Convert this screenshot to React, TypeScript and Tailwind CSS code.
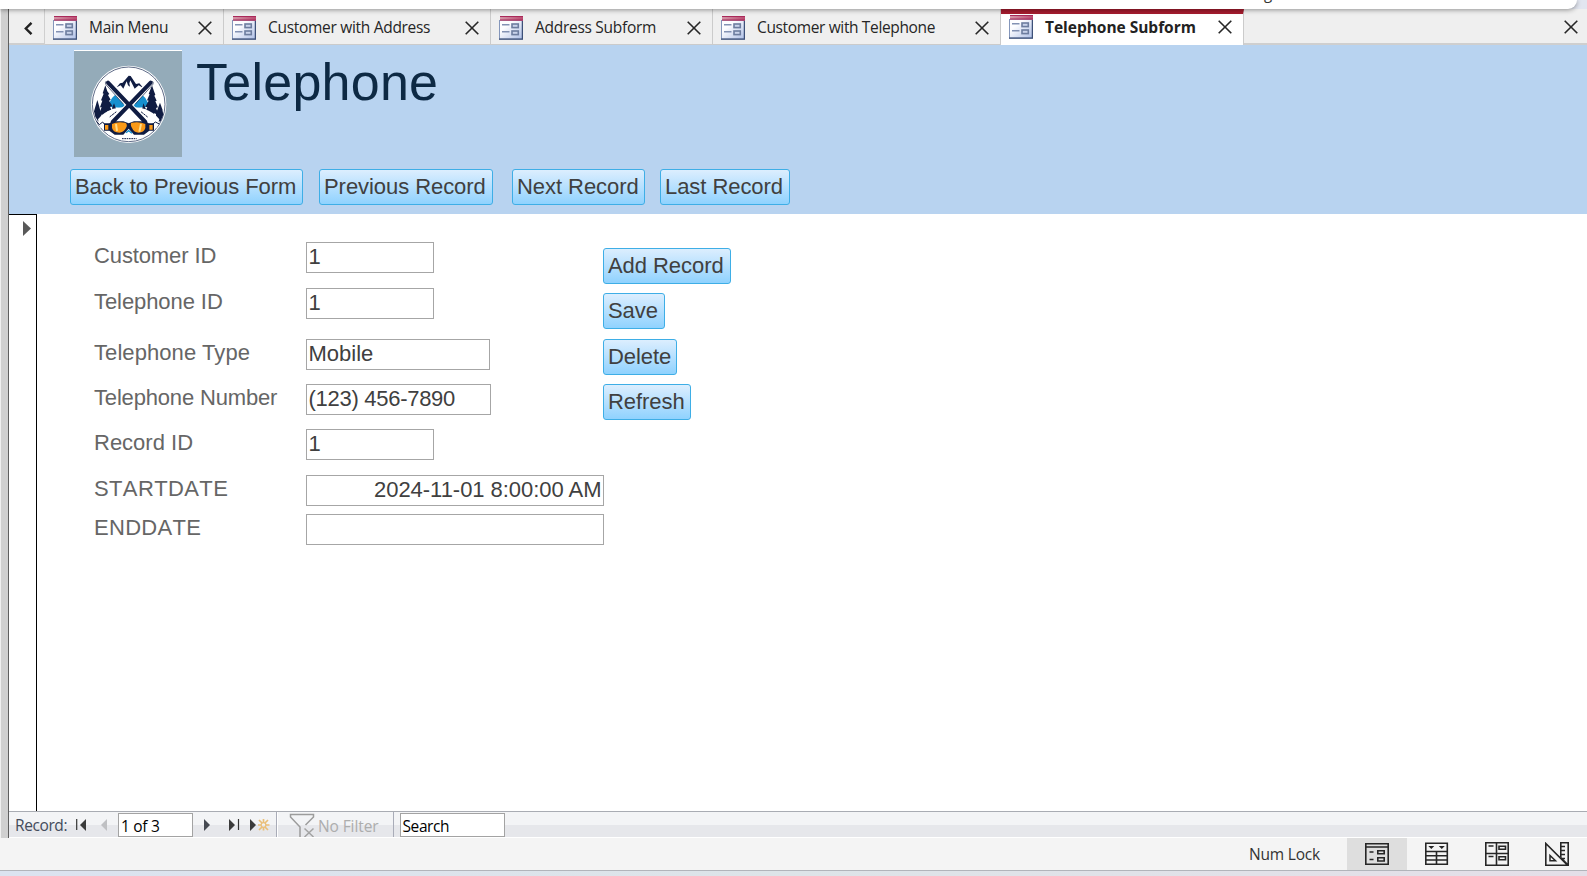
import React from "react";

const UI = "font-['Open_Sans','Noto_Sans',sans-serif]";

function FormIcon() {
  return (
    <svg className="block h-6 w-6 shrink-0" viewBox="0 0 24 24">
      <defs>
        <linearGradient id="formBody" x1="0" y1="0" x2="1" y2="1">
          <stop offset="0.3" stopColor="#fdfdff" />
          <stop offset="1" stopColor="#aebfe6" />
        </linearGradient>
        <linearGradient id="formTitle" x1="0" y1="0" x2="1" y2="0">
          <stop offset="0" stopColor="#d497a8" />
          <stop offset="1" stopColor="#bb4a70" />
        </linearGradient>
      </defs>
      <rect x="0.5" y="4.5" width="23" height="18.5" fill="url(#formBody)" stroke="#8496bb" />
      <path d="M0 23.2H24M23.4 5V23.5" stroke="#3d5078" strokeWidth="1.3" />
      <rect x="1" y="0" width="23" height="4.6" fill="url(#formTitle)" />
      <path d="M1 0.5H24M1 4H24" stroke="#a9295a" strokeWidth="1" />
      <path d="M3 8.7H10.5M3 15.7H10.5" stroke="#8291b3" strokeWidth="1.6" />
      <rect x="13" y="8" width="6.3" height="3.6" fill="#c9d3ea" stroke="#6d7d9f" strokeWidth="1.6" />
      <rect x="13" y="15" width="6.3" height="3.6" fill="#c9d3ea" stroke="#6d7d9f" strokeWidth="1.6" />
    </svg>
  );
}

function CloseIcon() {
  return (
    <svg className="block h-[14px] w-[14px] shrink-0" viewBox="0 0 14 14">
      <path d="M0.7 0.7L13.3 13.3M13.3 0.7L0.7 13.3" stroke="#262626" strokeWidth="1.6" fill="none" />
    </svg>
  );
}

type TabProps = { label: string; className: string; text: string };

function Tab({ label, className, text }: TabProps) {
  return (
    <div className={`flex h-[36px] shrink-0 items-center border-r border-b border-[#cbcbcb] pt-[2px] ${className}`}>
      <FormIcon />
      <span className={`whitespace-nowrap pt-px text-[#262626] ${text}`}>{label}</span>
      <span className="ml-auto">
        <CloseIcon />
      </span>
    </div>
  );
}

function Logo() {
  return (
    <svg className="block h-[107px] w-[108px] shrink-0" viewBox="12 6 324 321" preserveAspectRatio="none">
      <rect x="12" y="6" width="324" height="321" fill="#94abb9" />
      <rect x="12" y="6" width="324" height="3" fill="#fff" />
      <ellipse cx="176" cy="169" rx="113" ry="116" fill="#fff" />
      <ellipse cx="176" cy="169" rx="109" ry="112" fill="#fff" stroke="#25355c" strokeWidth="2.2" />
      <path d="M114 172L126 150L138 138L148 144L172 170L158 180L116 176ZM238 172L226 150L214 138L204 144L182 170L194 180L236 176Z" fill="#1690cf" />
      <path d="M140 118L150 106L158 104L176 83L182 84L198 108L208 106L220 120L206 112L194 122L181 97L178 106L180 116L174 112L170 100L160 122L152 112Z" fill="#101c42" />
      <g fill="#101c42">
        <path d="M106 112L112 130L118 138L114 141L122 155L117 158L127 174L120 176L128 194L112 190L108 206L98 200L86 200L95 178L90 178L97 158L93 157L101 137L98 136Z" />
        <path d="M246 112L252 130L256 140L253 143L260 158L256 160L264 178L258 180L266 200L252 196L246 208L238 196L224 196L232 178L226 176L236 158L231 157L239 139L236 138Z" />
        <path d="M82 156L88 176L94 200L96 222L84 220L76 206L72 190Z" />
        <path d="M270 164L277 184L280 200L272 220L258 222L258 196Z" />
        <path d="M132 166L138 182L130 188L126 180ZM220 166L228 184L216 186Z" />
      </g>
      <path d="M84 214Q100 192 130 182L166 176L186 176L222 182Q252 192 268 214L260 240L230 220H120L90 240Z" fill="#fff" />
      <path d="M80 220L88 230L98 222L106 232M246 230L256 222L268 228" stroke="#101c42" strokeWidth="3" fill="none" />
      <g strokeLinecap="round" fill="none">
        <path d="M112 102L232 230M244 102L122 230" stroke="#fff" strokeWidth="20" />
        <path d="M114 104L226 222M242 104L128 222" stroke="#101c42" strokeWidth="12" />
        <path d="M108 100Q104 104 108 110L160 168M248 100Q252 104 248 110L196 168" stroke="#101c42" strokeWidth="2" />
        <path d="M120 206L138 192M214 192L234 208" stroke="#101c42" strokeWidth="3" strokeDasharray="5 4" />
      </g>
      <path d="M102 226H118L128 220H160L176 226L192 220H226L236 226H252V248H238L222 260H192L176 242L160 260H134L118 248H102Z" fill="#101c42" />
      <path d="M126 228Q140 220 166 224Q174 230 168 240Q160 254 148 254Q130 254 126 240ZM184 224Q210 220 226 228V240Q222 254 206 254Q192 254 186 240Q180 230 184 224ZM105 231H115V245H105ZM238 231H248V245H238Z" fill="#fb9a18" />
      <path d="M138 228L141 249M213 228L208 251" stroke="#ffdc8a" strokeWidth="6" />
      <path d="M156 272H200" stroke="#101c42" strokeWidth="3" strokeDasharray="5 2" />
      <path d="M168 254L176 248L186 256" stroke="#1690cf" strokeWidth="4" fill="none" />
    </svg>
  );
}

function FormButton({ label, className }: { label: string; className: string }) {
  return (
    <button
      type="button"
      className={`flex h-[36px] shrink-0 justify-start rounded-[3px] border border-[#3eaee6] bg-linear-to-b from-[#dceefe] to-[#8fd2fe] pl-[4px] text-[22px] leading-[33px] tracking-[-0.06px] whitespace-nowrap text-[#404040] ${className}`}
    >
      {label}
    </button>
  );
}

type FieldProps = { label: string; value: string; className: string; text: string; box: string };

function Field({ label, value, className, text, box }: FieldProps) {
  return (
    <div className={`flex h-[31px] text-[22px] ${className}`}>
      <div className={`w-[212px] shrink-0 leading-[28px] whitespace-nowrap text-[#666666] ${text}`}>{label}</div>
      <div className={`h-[31px] border border-[#a6a6a6] bg-white px-[1.5px] leading-[28px] whitespace-nowrap text-[#404040] ${box}`}>
        {value}
      </div>
    </div>
  );
}

function RecordBar() {
  return (
    <div className={`flex h-[27px] items-stretch border-t border-b border-t-[#a9acb3] border-b-white bg-[linear-gradient(to_bottom,#f3f4f6_13px,#e6e7eb_13px)] text-[15.5px] ${UI}`}>
      <span className="ml-[6px] w-[60px] leading-[27px] tracking-[-0.4px] text-[#444c5c]">Record:</span>
      <svg className="block h-[25px] w-[43px]" viewBox="75 812 43 25">
        <path d="M76.7 819V830" stroke="#333" strokeWidth="1.2" />
        <path d="M86 819V831L80 825Z" fill="#3b3b3b" />
        <path d="M107 819V831L101 825Z" fill="#bfc0c3" />
      </svg>
      <div className="mt-px h-[24px] w-[75px] border border-[#a3a3a3] bg-white pl-[2px] leading-[24px] tracking-[-0.3px] text-black">1 of 3</div>
      <svg className="block h-[25px] w-[83px]" viewBox="193 812 83 25">
        <path d="M204 819V831L210 825Z" fill="#464a52" />
        <path d="M229 819V831L235 825ZM250 819V831L256 825Z" fill="#3b3b3b" />
        <path d="M238.5 819V830" stroke="#333" strokeWidth="1.2" />
        <path d="M263.5 819V822.5M263.5 827.5V830.5M258 825H261M266 825H269.5M259 820L262 823M268 820L265 823M259 830L262 827M268 830L265 827" stroke="#eabf78" strokeWidth="1.7" />
        <circle cx="263.5" cy="825" r="2.4" fill="none" stroke="#eabf78" strokeWidth="1.3" />
      </svg>
      <div className="w-[2px] border-r border-l border-r-white border-l-[#a9acb8]" />
      <svg className="block h-[25px] w-[41px]" viewBox="278 812 41 25">
        <path d="M300 837V827L290.5 817V814.5H313.5V817L305.5 825" fill="none" stroke="#9c9c9c" strokeWidth="1.5" />
        <path d="M304.5 828.5L313.5 837M313.5 828.5L304.5 837" stroke="#a3a3a3" strokeWidth="1.5" />
      </svg>
      <span className="-ml-px w-[75px] leading-[28px] tracking-[-0.1px] whitespace-nowrap text-[#adadad]">No Filter</span>
      <div className="w-[7px] border-l border-[#a9acb8]" />
      <div className="mt-px h-[24px] w-[105px] border border-[#a3a3a3] bg-white pl-[1.5px] leading-[24px] tracking-[-0.4px] text-black">Search</div>
    </div>
  );
}

function StatusBar() {
  return (
    <div className={`flex h-[32px] shrink-0 items-center bg-[#f4f4f4] ${UI}`}>
      <span className="ml-auto w-[98px] text-[15.5px] leading-[32px] tracking-[-0.2px] text-[#333]">Num Lock</span>
      <div className="flex h-full w-[60px] items-center justify-center bg-[#dedede]">
        <svg className="block h-6 w-6" viewBox="0 0 24 24" fill="none" stroke="#262626">
          <path d="M0.8 1.8H23.2V22.2H0.8ZM0.8 5H23.2" strokeWidth="1.6" />
          <path d="M4.5 10H8.5M4.5 17.5H8.5" strokeWidth="1.4" />
          <path d="M12.8 8.7H19.2V11.7H12.8ZM12.8 15.7H19.2V19H12.8Z" strokeWidth="1.6" />
        </svg>
      </div>
      <div className="flex h-full w-[60px] items-center justify-center">
        <svg className="block h-6 w-6" viewBox="0 0 24 24" fill="none" stroke="#262626">
          <path d="M0.8 1.2H22.3V22.3H0.8ZM0.8 9.5H22.3M0.8 13.8H22.3M0.8 18H22.3M11.5 9.5V22" strokeWidth="1.6" />
          <path d="M3.3 4H9.3L6.3 7ZM13.8 4H19.8L16.8 7Z" fill="#262626" stroke="none" />
        </svg>
      </div>
      <div className="flex h-full w-[60px] items-center justify-center">
        <svg className="block h-6 w-6" viewBox="0 0 24 24" fill="none" stroke="#262626">
          <path d="M0.8 0.8H23.2V23.2H0.8ZM0.8 11.5H23.2M11.5 0.8V23.2" strokeWidth="1.6" />
          <path d="M3.5 4H8.5M3.5 14.5H8.5" strokeWidth="1.5" />
          <path d="M14 4.2H20.5V7.2H14ZM14 14.7H20.5V17.7H14Z" strokeWidth="1.6" />
        </svg>
      </div>
      <div className="flex h-full w-[60px] items-center justify-center">
        <svg className="block h-6 w-6" viewBox="0 0 24 24" fill="none" stroke="#262626">
          <path d="M0.8 1.5V23.2H22.5Z" strokeWidth="1.6" />
          <path d="M5 13.5V18.7H10.5Z" strokeWidth="1.5" />
          <path d="M15.8 15V0.8H23.2V23.2L15.8 15.6M15.8 4.5H20M15.8 8.5H20M15.8 12.5H20M17 16.5H20" strokeWidth="1.6" />
        </svg>
      </div>
    </div>
  );
}

export default function App() {
  return (
    <div className="flex h-[876px] w-[1587px] flex-col overflow-hidden bg-[#f4f4f4] font-['Liberation_Sans',Arial,sans-serif]">
      <div className="relative z-10 flex h-[9px] shrink-0 bg-[#e2e6f0]">
        <div className="flex h-[9px] w-[1577px] rounded-br-[10px] bg-white shadow-[0_1px_5px_rgba(0,0,0,0.4)]">
          <div className={`ml-[1264px] h-[4px] w-3 text-[15px] leading-[4px] text-[#333] ${UI}`}>
            <span className="-mt-[9px] block">g</span>
          </div>
        </div>
      </div>

      <div className="flex h-[829px] shrink-0">
        <div className="w-[9px] shrink-0 border-r border-l border-r-[#5f5f5f] border-l-[#f0f0f0] bg-[#d0d0d0]" />
        <div className="flex min-w-0 flex-1 flex-col">
          <div className="flex h-[36px] shrink-0 bg-[#efefef]">
            <div className="flex w-[36px] shrink-0 items-center justify-center border-r border-b-2 border-[#cfcfcf] pl-[3px]">
              <svg className="mt-[5px] block h-[13px] w-[9px]" viewBox="0 0 9 13">
                <path d="M7.5 0.8L1.8 6.5L7.5 12.2" fill="none" stroke="#222" strokeWidth="2.4" />
              </svg>
            </div>
            <Tab label="Main Menu" className="w-[179px] pr-[11px] pl-[8px]" text={`ml-[12px] text-[15.5px] tracking-[-0.28px] ${UI}`} />
            <Tab label="Customer with Address" className="w-[267px] pr-[11px] pl-[8px]" text={`ml-[12px] text-[15.5px] tracking-[-0.3px] ${UI}`} />
            <Tab label="Address Subform" className="w-[222px] pr-[11px] pl-[8px]" text={`ml-[12px] text-[15.5px] tracking-[-0.28px] ${UI}`} />
            <Tab label="Customer with Telephone" className="w-[288px] pr-[11px] pl-[8px]" text={`ml-[12px] text-[15.5px] tracking-[-0.36px] ${UI}`} />
            <div className="flex h-[36px] w-[243px] shrink-0 items-center border-t-[5px] border-r border-t-[#a61c2e] border-r-[#cbcbcb] bg-white pr-[11px] pb-[5px] pl-[8px]">
              <FormIcon />
              <span className={`ml-[12px] pt-px text-[15.5px] font-bold tracking-[-0.03px] whitespace-nowrap text-[#222] ${UI}`}>Telephone Subform</span>
              <span className="ml-auto">
                <CloseIcon />
              </span>
            </div>
            <div className="flex flex-1 items-center justify-end border-b-2 border-[#cfcfcf] pt-[2px] pr-[9px]">
              <CloseIcon />
            </div>
          </div>

          <header className="h-[169px] shrink-0 bg-[#b8d3f0] pt-[5px]">
            <div className="flex pl-[65px]">
              <Logo />
              <h1 className="ml-[14px] text-[52px] leading-[64px] tracking-[0.25px] text-[#0d2944]">Telephone</h1>
            </div>
            <div className="mt-[12px] flex pl-[61px]">
              <FormButton label="Back to Previous Form" className="w-[233px]" />
              <FormButton label="Previous Record" className="ml-[16px] w-[174px]" />
              <FormButton label="Next Record" className="ml-[19px] w-[133px]" />
              <FormButton label="Last Record" className="ml-[15px] w-[130px]" />
            </div>
          </header>

          <main className="flex min-h-0 flex-1 bg-white">
            <div className="w-[28px] shrink-0 border-t border-r border-black bg-white">
              <svg className="mt-[6px] ml-[14px] block h-[15px] w-[8px]" viewBox="0 0 8 15">
                <path d="M0 0V15L8 7.5Z" fill="#595959" />
              </svg>
            </div>
            <div className="w-[511px] shrink-0 pt-[28px] pl-[57px]">
              <Field label="Customer ID" value="1" className="" text="tracking-[-0.12px]" box="w-[128px]" />
              <Field label="Telephone ID" value="1" className="mt-[15px]" text="tracking-[-0.08px]" box="w-[128px]" />
              <Field label="Telephone Type" value="Mobile" className="mt-[20px]" text="tracking-[0.08px]" box="w-[184px]" />
              <Field label="Telephone Number" value="(123) 456-7890" className="mt-[14px]" text="tracking-[-0.17px]" box="w-[185px] tracking-[-0.28px]" />
              <Field label="Record ID" value="1" className="mt-[14px]" text="" box="w-[128px]" />
              <Field label="STARTDATE" value="2024-11-01 8:00:00 AM" className="mt-[15px]" text="tracking-[0.38px] [font-kerning:none]" box="w-[298px] shrink-0 text-right tracking-[-0.04px]" />
              <Field label="ENDDATE" value="" className="mt-[8px]" text="tracking-[0.3px] [font-kerning:none]" box="w-[298px] shrink-0" />
            </div>
            <div className="flex flex-col items-start pt-[34px] pl-[55px]">
              <FormButton label="Add Record" className="w-[128px]" />
              <FormButton label="Save" className="mt-[9px] w-[62px]" />
              <FormButton label="Delete" className="mt-[10px] w-[74px]" />
              <FormButton label="Refresh" className="mt-[9px] w-[88px]" />
            </div>
          </main>

          <RecordBar />
        </div>
      </div>

      <StatusBar />
      <div className="h-[6px] shrink-0 border-t border-[#b1b4ba] bg-linear-to-r from-[#dbe3f0] via-[#dde4e8] to-[#e4dfe8]" />
    </div>
  );
}
